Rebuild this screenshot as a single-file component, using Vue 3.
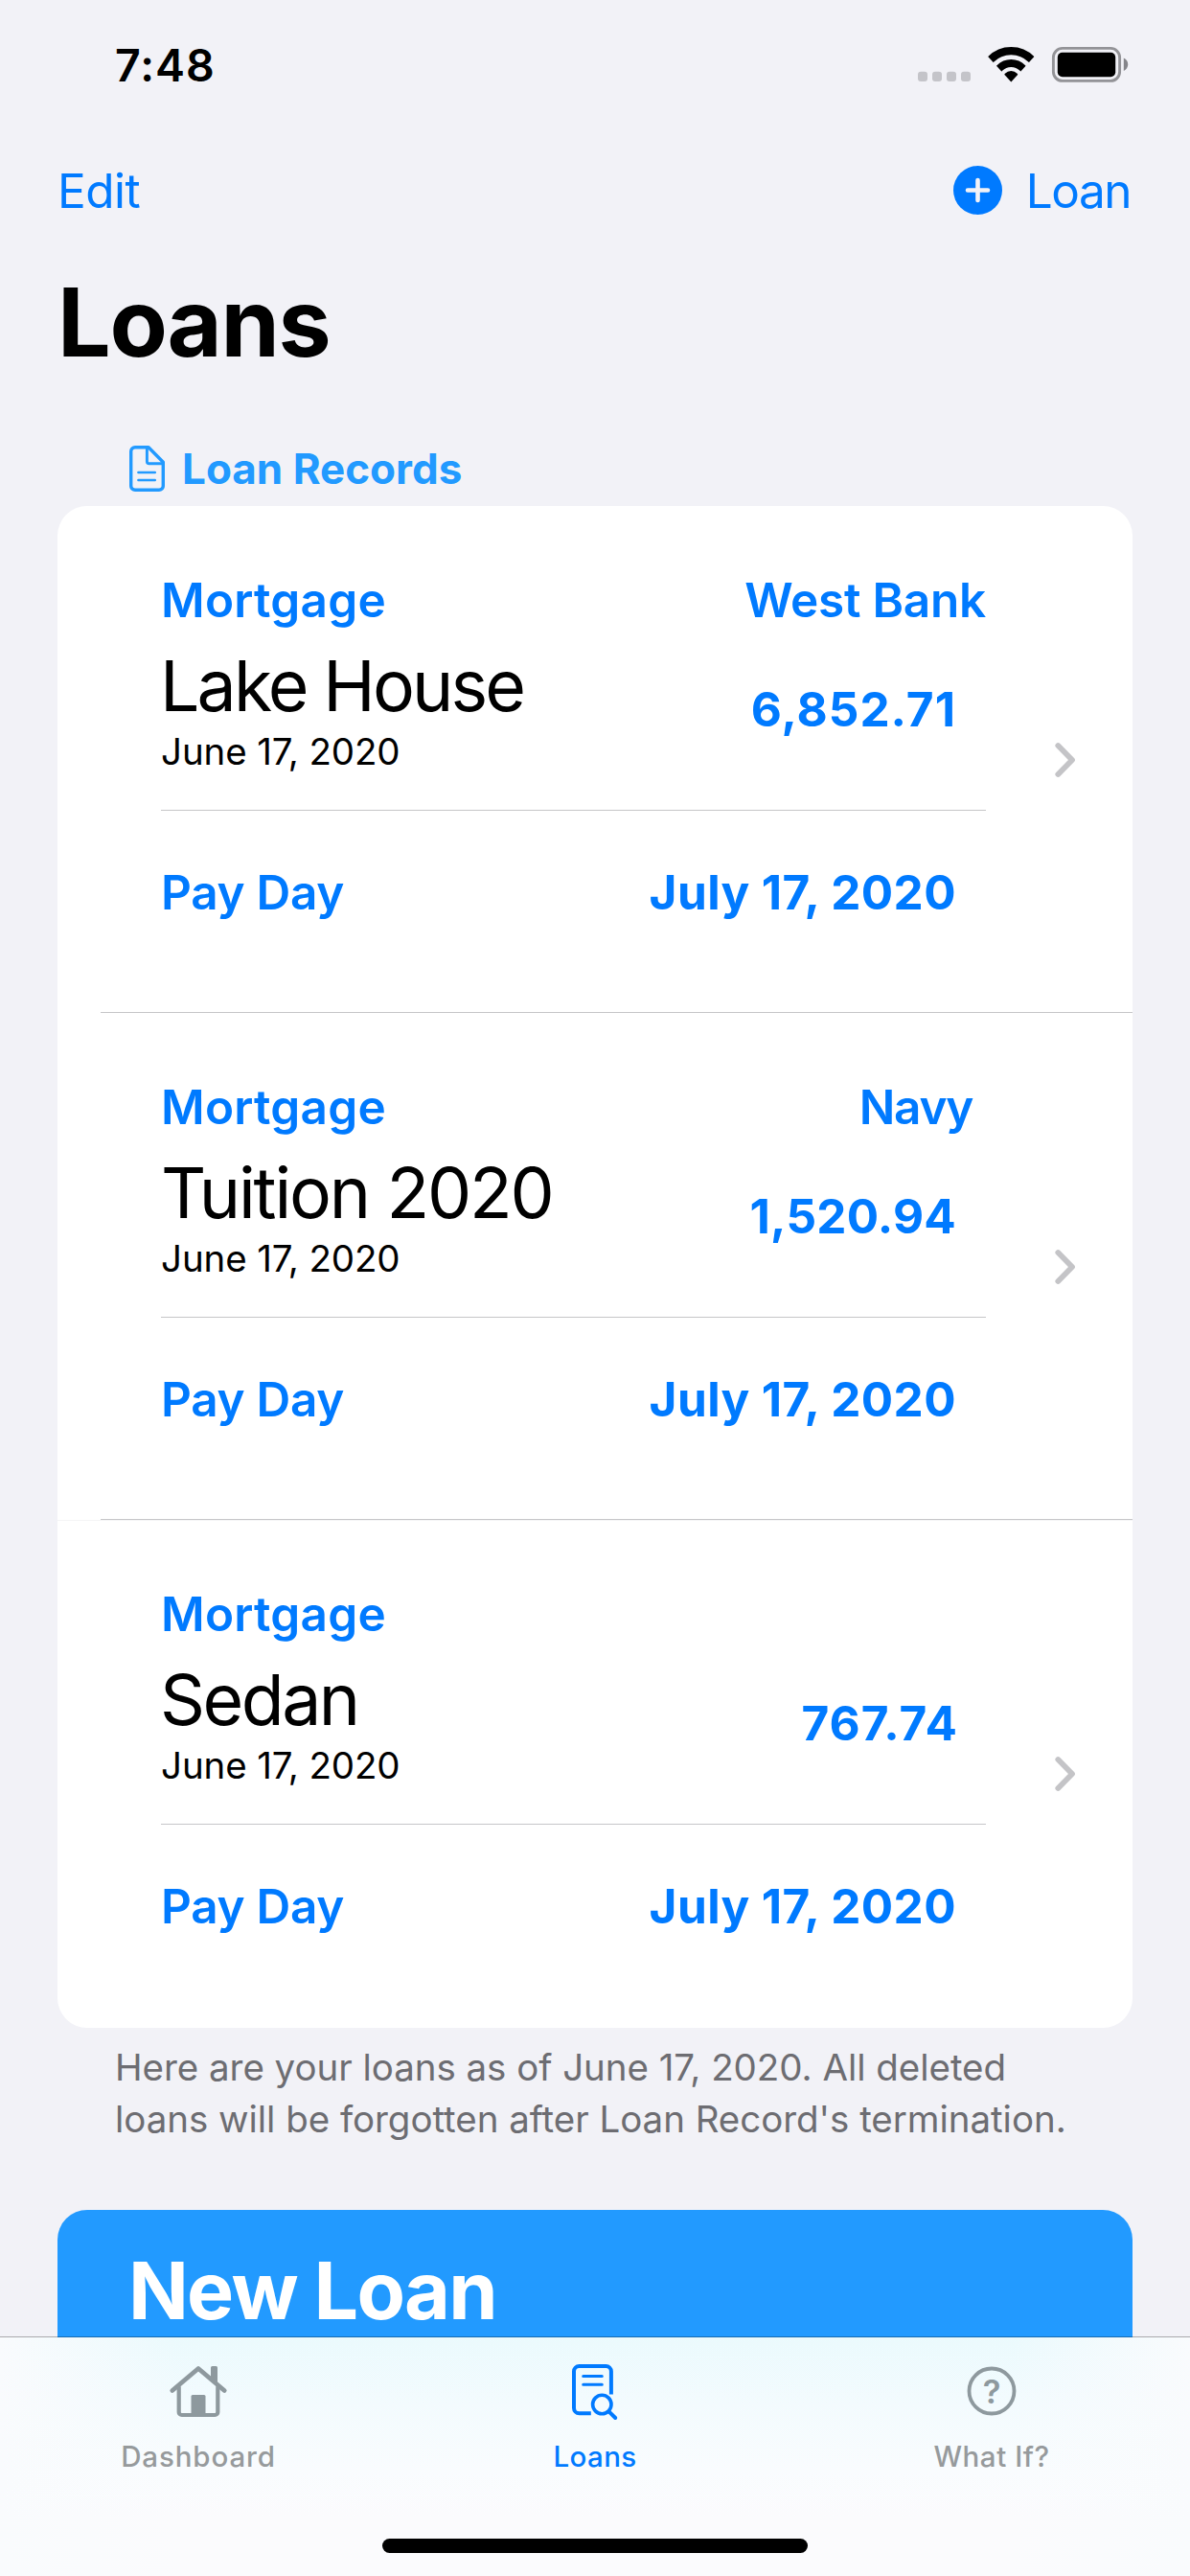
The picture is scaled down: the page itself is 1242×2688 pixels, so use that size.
<script setup>
const loans = [
  { kind: 'Mortgage', bank: 'West Bank', bankClass: 'wide', name: 'Lake House', nameClass: 'n-tight', date: 'June 17, 2020', amount: '6,852.71', amountClass: 'a-loose', payDay: 'July 17, 2020' },
  { kind: 'Mortgage', bank: 'Navy', bankClass: 'inset', name: 'Tuition 2020', nameClass: 'n-mid', date: 'June 17, 2020', amount: '1,520.94', amountClass: '', payDay: 'July 17, 2020' },
  { kind: 'Mortgage', bank: '', bankClass: '', name: 'Sedan', nameClass: 'n-short', date: 'June 17, 2020', amount: '767.74', amountClass: 'a-short', payDay: 'July 17, 2020' }
]
</script>

<template>
  <div class="screen">
    <header class="status">
      <span class="time">7:48</span>
      <svg class="status-icons" width="230" height="50" viewBox="955 43 230 50">
        <defs>
          <clipPath id="fan"><path d="M1055.3 85.4L1019.3 46H1091.3Z" /></clipPath>
        </defs>
        <g fill="#c4c4c9">
          <rect x="958" y="74.8" width="10" height="10.2" rx="3" />
          <rect x="973" y="74.8" width="10" height="10.2" rx="3" />
          <rect x="988" y="74.8" width="10" height="10.2" rx="3" />
          <rect x="1003" y="74.8" width="10" height="10.2" rx="3" />
        </g>
        <g clip-path="url(#fan)" fill="none" stroke="#000">
          <circle cx="1055.3" cy="83" r="29.9" stroke-width="8.2" />
          <circle cx="1055.3" cy="83" r="17" stroke-width="8" />
          <circle cx="1055.3" cy="83" r="9" fill="#000" stroke="none" />
        </g>
        <rect x="1099.4" y="50.4" width="69.2" height="34" rx="9.5" fill="none" stroke="#939397" stroke-width="2.9" />
        <rect x="1103.8" y="54.8" width="60.4" height="25.4" rx="5" />
        <path d="M1172.8 60.6a7.3 7.3 0 0 1 0 13.4z" fill="#85858a" />
      </svg>
    </header>

    <nav class="nav">
      <span class="edit">Edit</span>
      <span class="add">
        <svg width="51" height="51" viewBox="0 0 51 51">
          <circle cx="25.5" cy="25.5" r="25.5" fill="#007aff" />
          <path d="M25.5 15v21M15 25.5h21" stroke="#f2f2f7" stroke-width="4.6" stroke-linecap="round" />
        </svg>
        <span class="add-label">Loan</span>
      </span>
    </nav>

    <h1 class="title">Loans</h1>

    <div class="section">
      <svg width="37" height="48" viewBox="0 0 37 48" fill="none" stroke="#229aff" stroke-width="3.4" stroke-linejoin="round">
        <path d="M6 1.7H20L35.3 17.2V42a4.3 4.3 0 0 1-4.3 4.3H6A4.3 4.3 0 0 1 1.7 42V6A4.3 4.3 0 0 1 6 1.7Z" />
        <path d="M18.4 2V16.5a2.3 2.3 0 0 0 2.3 2.3H35" stroke-width="2.9" />
        <path d="M9.5 28H26.7M9.5 36H26.7" stroke-width="2.7" stroke-linecap="round" />
      </svg>
      <span>Loan Records</span>
    </div>

    <main class="card">
      <section v-for="loan in loans" :key="loan.name" class="loan">
        <div class="body">
          <div class="top">
            <div class="left">
              <div class="kind">{{ loan.kind }}</div>
              <div class="name" :class="loan.nameClass">{{ loan.name }}</div>
              <div class="date">{{ loan.date }}</div>
            </div>
            <div class="right">
              <div class="bank" :class="loan.bankClass">{{ loan.bank }}</div>
              <div class="amount" :class="loan.amountClass">{{ loan.amount }}</div>
            </div>
          </div>
          <div class="pay">
            <span class="pay-label">Pay Day</span>
            <span class="pay-date">{{ loan.payDay }}</span>
          </div>
        </div>
        <svg class="chevron" width="22" height="38" viewBox="0 0 22 38">
          <path d="M3.3 4L18 19L3.3 34" fill="none" stroke="#c4c4c7" stroke-width="5.8" stroke-linecap="round" stroke-linejoin="round" />
        </svg>
      </section>
    </main>

    <p class="note">Here are your loans as of June 17, 2020. All deleted<br>loans will be forgotten after Loan Record's termination.</p>

    <div class="new-loan">New Loan</div>

    <footer class="tabs">
      <div class="tab-row">
        <div class="tab">
          <svg width="72" height="64" viewBox="169.5 2463 72 64" fill="none" stroke="#8e999e" stroke-linecap="round" stroke-linejoin="round">
            <path d="M178.3 2494.5L205.5 2471.5L232.7 2494.5" stroke-width="4.8" />
            <path d="M185.2 2491V2517a3 3 0 0 0 3 3H222.8a3 3 0 0 0 3-3V2491" stroke-width="4.2" />
            <rect x="198" y="2499" width="15" height="21.5" rx="1.5" fill="#8e999e" stroke="none" />
            <path d="M218.5 2484V2470.5a1.5 1.5 0 0 1 1.5-1.5H224a1.5 1.5 0 0 1 1.5 1.5V2490Z" fill="#8e999e" stroke="none" />
          </svg>
          <span class="t1">Dashboard</span>
        </div>
        <div class="tab active">
          <svg width="72" height="64" viewBox="585 2463 72 64" fill="none" stroke="#007aff" stroke-width="4">
            <path d="M637.9 2498.5V2474.5a5.5 5.5 0 0 0-5.5-5.5H604.5a5.5 5.5 0 0 0-5.5 5.5V2512.8a5.5 5.5 0 0 0 5.5 5.5H616.8" />
            <path d="M608.7 2479.4H628.3M608.7 2488.3H628.3" stroke-width="3" stroke-linecap="round" />
            <circle cx="628.3" cy="2509" r="9.7" stroke-width="3.6" />
            <path d="M635.5 2516.3L642.2 2523" stroke-linecap="round" />
          </svg>
          <span class="t2">Loans</span>
        </div>
        <div class="tab">
          <svg width="72" height="64" viewBox="998.5 2463 72 64">
            <circle cx="1034.5" cy="2495" r="23.5" fill="none" stroke="#8e999e" stroke-width="3.8" />
            <text class="mark" x="1034.5" y="2507.6" text-anchor="middle">?</text>
          </svg>
          <span class="t3">What If?</span>
        </div>
      </div>
      <div class="home"></div>
    </footer>
  </div>
</template>

<style>
body {
  background: #f2f2f7;
}
</style>

<style scoped>
.screen {
  position: relative;
  width: 1242px;
  height: 2688px;
  overflow: hidden;
  background: #f2f2f7;
  color: #000;
  font-family: Inter, "Liberation Sans", sans-serif;
  white-space: nowrap;
}
svg {
  display: block;
  flex: none;
}
.status {
  display: flex;
  justify-content: space-between;
  align-items: center;
  height: 136px;
  padding: 0 57px 0 120px;
  box-sizing: border-box;
}
.time {
  font-size: 46.5px;
  font-weight: 600;
  letter-spacing: 1px;
}
.nav {
  display: flex;
  justify-content: space-between;
  align-items: center;
  height: 125px;
  padding: 0 62px 0 60px;
  color: #007aff;
  font-size: 49.5px;
}
.edit {
  letter-spacing: -0.5px;
}
.add {
  display: flex;
  align-items: center;
  gap: 25px;
}
.add-label {
  letter-spacing: -1.5px;
}
.title {
  margin: 0;
  padding-left: 60px;
  height: 150px;
  line-height: 150px;
  font-size: 98.6px;
  font-weight: 700;
  letter-spacing: -1.3px;
}
.section {
  display: flex;
  align-items: center;
  gap: 18px;
  margin-top: 39px;
  height: 78px;
  padding: 0 0 0 135px;
  color: #229aff;
  font-size: 44px;
  font-weight: 700;
}
.card {
  margin: 0 60px;
  padding-bottom: 1px;
  background: #fff;
  border-radius: 31px;
}
.loan {
  display: flex;
  align-items: center;
  height: 529px;
  padding-left: 108px;
  box-sizing: border-box;
}
.loan:not(:last-child) {
  background: linear-gradient(#c6c6c8, #c6c6c8) right bottom / 1077px 1px no-repeat;
}
.loan:last-child {
  background: linear-gradient(#f4f4f6, #f4f4f6) left top / 100% 1px no-repeat;
}
.body {
  width: 861px;
  height: 529px;
  box-sizing: border-box;
  padding-top: 68px;
}
.top {
  display: flex;
  justify-content: space-between;
  height: 250px;
  box-sizing: border-box;
  border-bottom: 1px solid #c6c6c8;
}
.kind,
.bank,
.amount,
.pay {
  color: #007aff;
  font-size: 49.5px;
  line-height: 60px;
  font-weight: 600;
}
.kind {
  letter-spacing: 0.25px;
}
.name {
  margin-top: 15px;
  height: 90px;
  line-height: 90px;
  font-size: 73.3px;
}
.n-tight {
  margin-left: -1px;
  letter-spacing: -2.85px;
}
.n-mid {
  letter-spacing: -2.15px;
}
.n-short {
  margin-left: -1px;
  letter-spacing: -2.5px;
}
.date {
  height: 46px;
  line-height: 46px;
  font-size: 38.5px;
  letter-spacing: -0.1px;
}
.right {
  text-align: right;
}
.bank {
  height: 60px;
}
.wide {
  letter-spacing: -0.25px;
}
.inset {
  letter-spacing: -1.3px;
  padding-right: 14px;
}
.amount {
  margin-top: 54px;
  padding-right: 31px;
  font-weight: 700;
  letter-spacing: 0.2px;
}
.a-loose {
  letter-spacing: 1px;
}
.a-short {
  padding-right: 29px;
  letter-spacing: 1px;
}
.pay {
  display: flex;
  justify-content: space-between;
  margin-top: 55px;
  padding-right: 31px;
}
.pay-label {
  letter-spacing: -0.3px;
}
.pay-date {
  font-weight: 700;
  letter-spacing: 0.42px;
}
.chevron {
  margin-left: 72px;
}
.note {
  margin: 14px 0 0 120px;
  color: #6d6d72;
  font-size: 38.5px;
  line-height: 54px;
  letter-spacing: -0.04px;
}
.new-loan {
  margin: 68px 60px 0;
  height: 300px;
  padding-left: 74px;
  border-radius: 31px;
  background: #229aff;
  color: #fff;
  font-size: 82.5px;
  line-height: 168px;
  font-weight: 700;
  letter-spacing: -1.76px;
}
.tabs {
  position: absolute;
  left: 0;
  right: 0;
  bottom: 0;
  height: 250px;
  box-sizing: border-box;
  border-top: 1px solid rgba(0, 0, 0, 0.3);
  background:
    linear-gradient(90deg, #f9fbfd, rgba(249, 251, 253, 0) 15%, rgba(249, 251, 253, 0) 85%, #f9fbfd) padding-box,
    linear-gradient(#ebfafd, #f3fbfe 28%, #f9fcfe 55%, #fbfbfd 75%) padding-box;
}
.tab-row {
  display: flex;
  padding-top: 24px;
}
.tab {
  flex: 1 1 0;
  display: flex;
  flex-direction: column;
  align-items: center;
  color: #969a9c;
  font-size: 29.5px;
  line-height: 36px;
  font-weight: 500;
}
.tab svg {
  margin-bottom: 18px;
}
.active {
  color: #007aff;
}
.t1 {
  letter-spacing: 0.86px;
}
.t2 {
  letter-spacing: 0.4px;
}
.t3 {
  letter-spacing: 0.54px;
}
.mark {
  font: 600 34.5px Inter, "Liberation Sans", sans-serif;
  fill: #8e999e;
}
.home {
  width: 444px;
  height: 15px;
  margin: 68px auto 0;
  border-radius: 8px;
  background: #000;
}
</style>
